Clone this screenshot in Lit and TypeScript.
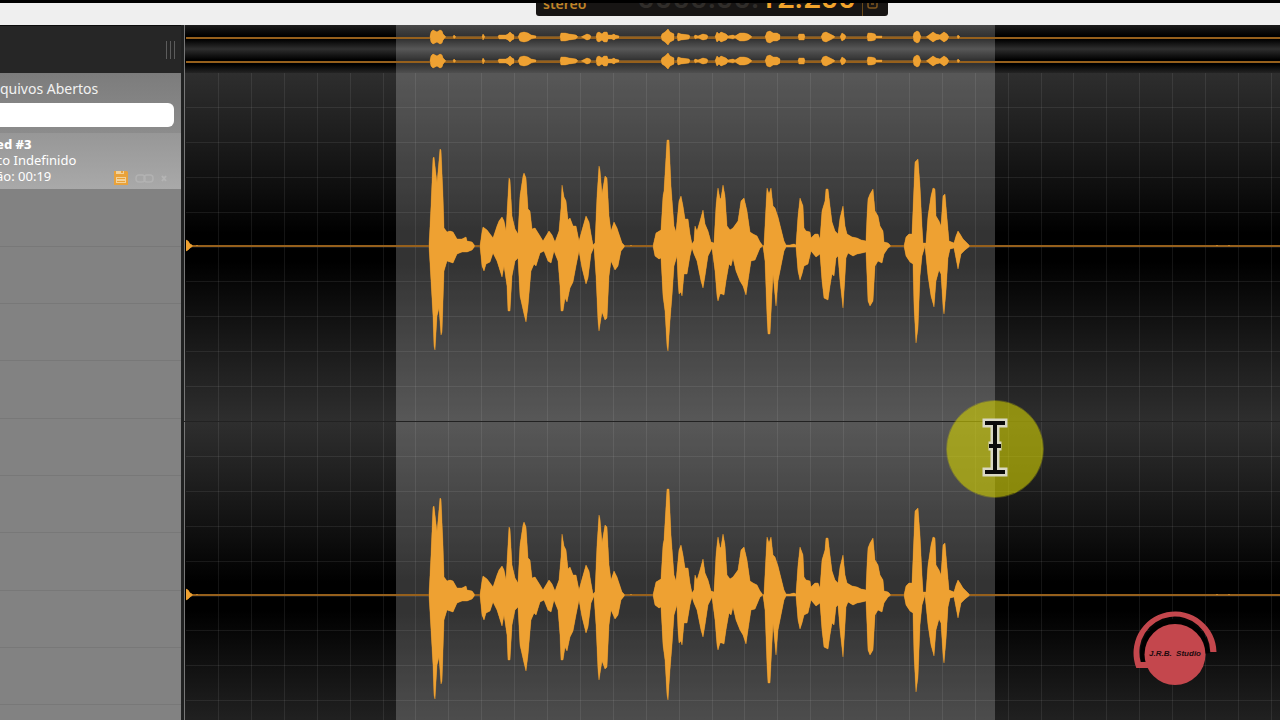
import { LitElement, html, svg, css } from "lit";
import { customElement, property } from "lit/decorators.js";

// Horizontal range of the visible timeline, in timeline units.
const VIEW_START = 186;
const VIEW_WIDTH = 1094;

// Envelopes: "position,amplitude" pairs above and below the zero line.
const UPPER =
  "186,6 188,5 190,2 192,1 193,0 196,0 197,1 198,0 429,0 431,40 433,88 434,89 437,63 440,97 441,96 443,50 444,18 447,14 450,15 453,14 457,7 462,7 466,9 467,5 472,4 475,0 " +
  "480,0 482,14 483,19 487,16 490,12 493,8 497,20 499,25 502,29 504,25 506,15 509,68 510,66 512,30 515,17 518,12 520,50 523,70 524,73 526,68 528,37 530,35 532,17 535,18 540,10 543,5 546,10 549,15 552,11 555,4 " +
  "559,15 561,38 562,61 564,49 566,45 568,26 570,28 573,20 576,20 579,5 582,16 586,30 589,24 591,12 593,1 595,3 597,50 599,80 600,76 602,52 605,70 607,68 609,30 611,15 614,24 617,18 620,9 622,3 625,0 630,0 631,1 632,0 " +
  "653,0 656,13 661,16 663,50 664,55 667,106 669,106 671,60 674,20 676,14 679,45 681,50 683,40 685,27 688,27 690,12 692,2 694,5 695,20 697,15 700,25 703,36 705,22 708,15 711,4 714,3 716,40 717,50 718,58 720,47 721,48 723,61 725,50 727,20 730,16 733,18 738,25 741,45 744,48 747,35 750,14 753,12 757,10 760,4 763,0 " +
  "764,1 766,40 767,58 769,52 771,58 773,40 775,38 778,29 781,17 784,5 786,1 790,1 794,2 796,1 798,30 800,48 803,40 804,18 806,15 810,14 811,8 815,12 818,12 820,7 822,35 825,45 826,57 828,57 830,40 832,24 835,15 838,12 840,28 843,40 845,20 847,12 852,9 857,8 861,6 866,5 867,30 868,47 870,52 873,57 875,35 878,30 880,20 883,15 884,4 888,3 891,0 " +
  "904,0 906,9 909,12 912,12 914,60 915,84 918,87 920,60 922,20 923,3 926,3 928,30 931,50 933,58 935,57 936,30 939,25 941,20 943,50 945,52 947,28 949,5 954,3 956,10 958,15 960,12 963,7 967,3 970,0 1216,0 1217,1 1218,0 1228,0 1229,1 1230,0";
const LOWER =
  "186,5 188,4 190,2 193,0 429,0 431,35 433,70 434,100 435,104 437,70 439,62 441,89 442,86 444,25 447,15 453,17 457,8 462,6 467,6 472,4 475,0 " +
  "480,0 482,20 484,25 486,18 490,16 493,7 497,15 502,31 504,20 507,40 508,65 510,65 512,30 515,15 518,12 520,50 524,68 526,76 528,60 531,25 534,18 536,20 540,7 544,5 548,15 551,17 554,5 558,15 560,40 561,65 563,65 565,52 567,56 570,42 573,36 576,20 579,5 582,22 586,38 588,32 591,8 594,1 596,30 598,75 599,85 602,66 605,74 607,72 609,30 611,15 615,24 618,20 621,5 625,0 " +
  "653,0 655,10 659,13 661,12 663,50 665,65 667,100 668,105 670,75 672,50 674,20 677,10 678,35 679,48 681,46 682,50 684,28 687,28 690,10 692,2 694,8 697,15 701,35 703,42 705,30 708,10 712,2 715,25 717,50 718,55 720,48 722,48 724,49 726,35 729,18 731,20 733,12 736,25 740,35 743,40 746,49 748,35 751,15 755,14 760,2 763,0 " +
  "765,15 767,70 768,88 770,88 773,28 776,60 778,35 781,20 784,5 786,1 796,1 798,25 800,34 802,28 804,20 808,18 811,5 816,11 820,8 822,35 824,52 828,54 830,40 832,28 834,30 836,12 838,10 840,35 843,62 845,30 846,12 848,7 853,10 857,8 862,7 866,6 867,30 868,55 870,60 873,55 875,20 878,15 882,17 884,8 888,2 891,0 " +
  "904,0 906,10 910,16 913,18 914,60 916,97 918,82 920,30 922,10 925,0 928,30 931,50 934,61 936,35 939,24 941,28 943,60 944,68 946,45 948,12 950,3 954,2 958,23 961,8 965,4 970,0";
const OVERVIEW =
  "430,0 431,5 433,7 435,6 437,5 440,7 442,6 443,3 445,1 446,0 453,0 454,2 456,0 482,0 483,3 485,0 498,0 499,2 503,2 506,2 508,3 510,5 512,3 514,2 514,0 518,0 520,4 524,5 528,4 531,2 536,1 536,0 " +
  "560,0 561,4 565,4 569,3 576,2 578,0 581,0 583,1 587,3 590,2 591,0 596,0 597,4 599,5 602,3 604,5 607,5 608,2 612,2 614,3 615,2 619,1 619,0 661,0 662,3 665,5 668,8 670,5 674,3 674,0 677,0 678,4 681,3 689,2 690,0 694,0 695,2 698,1 703,3 707,2 708,0 " +
  "715,0 717,5 719,3 721,5 726,3 728,1 733,2 735,1 740,4 744,4 748,3 751,1 752,0 765,0 767,5 770,6 773,4 777,4 780,2 780,0 798,0 799,3 804,3 805,0 821,0 823,4 826,5 830,3 834,1 835,0 840,0 842,4 845,2 846,0 867,0 868,4 871,4 875,3 876,1 882,1 882,0 " +
  "913,0 914,4 917,6 919,5 921,0 926,0 929,2 933,5 936,3 940,2 944,5 947,3 949,0 957,0 958,2 960,0";

function envelope(upper: string, lower: string, mid: number): string {
  const read = (s: string) => s.split(" ").map((p) => p.split(",").map(Number));
  const top = read(upper).map(([x, a]) => `${x},${mid - a}`);
  const bottom = read(lower)
    .map(([x, a]) => `${x},${mid + a}`)
    .reverse();
  return [...top, ...bottom].join(" ");
}

@customElement("wave-channel")
class WaveChannel extends LitElement {
  @property({ type: Boolean }) overview = false;

  static styles = css`
    :host {
      display: block;
    }
    .wave {
      display: block;
      width: 100%;
      height: 100%;
    }
    .fill {
      fill: #eea132;
      stroke: #c98527;
      stroke-opacity: 0.5;
    }
    .zero {
      fill: #96601c;
    }
    .grid {
      fill: #ffffff;
      fill-opacity: 0.08;
    }
  `;

  render() {
    const h = this.overview ? 24 : 349;
    const mid = this.overview ? 12 : 173;
    const cols = Array.from({ length: 33 }, (_, i) => Math.round(218 + i * 32.9));
    const rows = Array.from({ length: 9 }, (_, i) => Math.round((i + 1) * 34.9) - 1);
    return html`<svg
      class="wave"
      viewBox="${VIEW_START} 0 ${VIEW_WIDTH} ${h}"
      preserveAspectRatio="none"
      aria-hidden="true"
    >
      ${this.overview
        ? null
        : svg`${cols.map((x) => svg`<rect class="grid" x=${x} y="0" width="1" height=${h}></rect>`)}
          ${rows.map((y) => svg`<rect class="grid" x=${VIEW_START} y=${y} width=${VIEW_WIDTH} height="1"></rect>`)}`}
      <polygon
        class="fill"
        points=${envelope(this.overview ? OVERVIEW : UPPER, this.overview ? OVERVIEW : LOWER, mid)}
      ></polygon>
      <rect class="zero" x=${VIEW_START} y=${this.overview ? mid : mid - 1} width=${VIEW_WIDTH} height="2"></rect>
      <polygon
        fill="#eea132"
        points=${envelope(this.overview ? OVERVIEW : UPPER, this.overview ? OVERVIEW : LOWER, mid)}
      ></polygon>
    </svg>`;
  }
}

@customElement("file-panel")
class FilePanel extends LitElement {
  static styles = css`
    :host {
      display: flex;
      flex-direction: column;
      box-sizing: border-box;
      overflow: hidden;
      background: #262626;
      color: #fff;
      font: 13px/16px "Noto Sans", "Open Sans", sans-serif;
    }
    .dock {
      display: flex;
      flex: none;
      justify-content: flex-end;
      align-items: center;
      gap: 3px;
      height: 48px;
      padding: 0 6px;
      border-top: 1px solid #0c0c0c;
      box-sizing: border-box;
    }
    .grip {
      width: 1px;
      height: 18px;
      background: #5c5c5c;
    }
    .panel {
      flex: 1;
      min-height: 0;
      display: flex;
      flex-direction: column;
      background: #828282;
      overflow: hidden;
    }
    .search {
      flex: none;
      display: flex;
      flex-direction: column;
      padding: 6px 7px 6px 0;
      background: linear-gradient(#7c7c7c, #8c8c8c);
    }
    .title {
      font-size: 14px;
      line-height: 20px;
      height: 24px;
      color: #f2f2f2;
      white-space: nowrap;
    }
    .box {
      box-sizing: border-box;
      width: 100%;
      height: 24px;
      border: 0;
      border-radius: 0 6px 6px 0;
      background: #fff;
      outline: 0;
    }
    .file {
      flex: none;
      display: flex;
      justify-content: space-between;
      align-items: flex-end;
      height: 56px;
      padding: 0 13px 4px 0;
      box-sizing: border-box;
      background: linear-gradient(#979797, #a9a9a9);
      white-space: nowrap;
    }
    .meta {
      display: flex;
      flex-direction: column;
      margin-left: -4px;
      padding-bottom: 1px;
    }
    .name {
      font-weight: 800;
    }
    .badges {
      display: block;
      width: 56px;
      height: 16px;
    }
    .row {
      flex: none;
      box-sizing: border-box;
      height: 57px;
      border-bottom: 1px solid #787878;
    }
    .row:nth-child(3n) {
      height: 58px;
    }
  `;

  render() {
    return html`
      <div class="dock"><i class="grip"></i><i class="grip"></i><i class="grip"></i></div>
      <div class="panel">
        <div class="search">
          <label class="title" for="filter">quivos Abertos</label>
          <input class="box" id="filter" type="text" />
        </div>
        <div class="file">
          <div class="meta">
            <span class="name">ed #3</span>
            <span>co Indefinido</span>
            <span>ão: 00:19</span>
          </div>
          <svg class="badges" viewBox="0 0 56 16" aria-hidden="true">
            <path fill="#e9a23b" d="M2 2h13l1 1v13H2z" />
            <path fill="#f3d29a" d="M4 2h8v3H4zM4 8h10v6H4z" />
            <path fill="#e9a23b" d="M9 2h2v2h-2zM5 9h8v1H5zM5 12h8v1H5z" />
            <g fill="none" stroke="#b2b2b2" stroke-width="1.5">
              <rect x="24" y="6" width="9" height="7" rx="3" />
              <rect x="32" y="6" width="9" height="7" rx="3" />
            </g>
            <path stroke="#b4b4b4" stroke-width="2" d="M50 7l4 5M54 7l-4 5" />
          </svg>
        </div>
        ${Array.from({ length: 9 }, () => html`<div class="row"></div>`)}
      </div>
    `;
  }
}

@customElement("app-root")
class AppRoot extends LitElement {
  static styles = css`
    :host {
      display: flex;
      flex-direction: column;
      position: relative;
      height: 100vh;
      overflow: hidden;
      background: #000;
      font-family: "Noto Sans", "Open Sans", sans-serif;
    }
    .toolbar {
      flex: none;
      display: flex;
      justify-content: center;
      align-items: flex-start;
      height: 25px;
      box-sizing: border-box;
      padding-left: 144px;
      border-top: 3px solid #000;
      background: #efefef;
    }
    .display {
      display: flex;
      align-items: flex-end;
      box-sizing: border-box;
      width: 352px;
      height: 13px;
      padding: 0 6px 0 7px;
      overflow: hidden;
      border-radius: 0 0 3px 3px;
      background: #171514;
      color: #f2a42c;
    }
    .mode {
      flex: 1;
      font-size: 14px;
      line-height: 24px;
      font-weight: 600;
      color: #c08427;
    }
    .clock {
      font: 500 31px/37px "Roboto", sans-serif;
      white-space: nowrap;
    }
    .idle {
      color: #302d2a;
    }
    .lock {
      display: flex;
      justify-content: center;
      align-items: flex-start;
      width: 19px;
      height: 13px;
      margin-left: 6px;
      border-left: 1px solid #6b4a1a;
    }
    .lock-icon {
      width: 11px;
      height: 6px;
    }
    .work {
      flex: 1;
      min-height: 0;
      display: grid;
      grid-template-columns: 181px 1fr;
    }
    .editor {
      position: relative;
      min-width: 0;
      overflow: hidden;
      border-left: 3px solid #202121;
      padding-left: 2px;
      background:
        linear-gradient(#777, #777) 0 0 / 1px 100% no-repeat,
        linear-gradient(#1c1c1c, #000 45%, #000 60%, #2e2e2e) 0 0 / 100% 24px no-repeat,
        linear-gradient(#2e2e2e, #000 45%, #000 65%, #242424) 0 24px / 100% 24px no-repeat,
        linear-gradient(#2e2e2e, #202020 15%, #0e0e0e 33%, #000 46%, #000 54%, #0e0e0e 67%, #202020 85%, #2e2e2e) 0 48px /
          100% 349px repeat-y;
    }
    .small {
      height: 24px;
    }
    .track {
      height: 349px;
    }
    .selection {
      position: absolute;
      top: 0;
      bottom: 0;
      left: 19.3%;
      width: 54.7%;
      background: rgba(255, 255, 255, 0.2);
    }
    .waves {
      position: relative;
    }
    .divider {
      position: absolute;
      top: 396px;
      left: 0;
      right: 0;
      height: 1px;
      background: #222;
    }
    .pointer {
      position: absolute;
      left: 945px;
      top: 399px;
      width: 100px;
      height: 100px;
    }
    .brand {
      position: absolute;
      right: 62px;
      bottom: 33px;
      width: 86px;
      height: 76px;
    }
    .brand-text {
      font: italic 700 8px "Liberation Sans", Arial, sans-serif;
      fill: #220a0d;
      white-space: pre;
    }
  `;

  render() {
    return html`
      <header class="toolbar">
        <div class="display">
          <span class="mode">stereo</span>
          <span class="clock"><span class="idle">0000:00:</span>12.200</span>
          <span class="lock">
            <svg class="lock-icon" viewBox="0 0 11 6" aria-hidden="true">
              <path fill="none" stroke="#80561d" stroke-width="1.5" d="M1 0v3q0 2 2 2h5q2 0 2-2V0M4 1h3" />
            </svg>
          </span>
        </div>
      </header>
      <main class="work">
        <file-panel></file-panel>
        <section class="editor">
          <div class="selection"></div>
          <div class="waves">
            <wave-channel class="small" overview></wave-channel>
            <wave-channel class="small" overview></wave-channel>
            <wave-channel class="track"></wave-channel>
            <wave-channel class="track"></wave-channel>
          </div>
          <div class="divider"></div>
        </section>
      </main>
      <svg class="pointer" viewBox="0 0 100 100" aria-hidden="true">
        <circle cx="50" cy="50" r="48" fill="#d4d200" fill-opacity="0.6" />
        <circle cx="50" cy="50" r="48.500" fill="none" stroke="#d4d200" stroke-opacity="0.3" />
        <path fill="none" stroke="#d9d8c4" stroke-width="9" stroke-linecap="square" d="M42 24h16M50 24v49M42 73h16M48 47h4" />
        <path fill="none" stroke="#0b0b0b" stroke-width="4" d="M40 24h20M50 24v49M40 73h20M44 47h12" />
      </svg>
      <svg class="brand" viewBox="0 0 86 76" role="img" aria-label="J.R.B. Studio">
        <path d="M9 51A35.500 35.500 0 0 1 43 8A35.500 35.500 0 0 1 78 42z" />
        <path fill="#c4474d" d="M4.300 57A41.500 41.500 0 1 1 84.500 41H78.300A35.500 35.500 0 1 0 8.700 51H22V57z" />
        <circle cx="43" cy="43.500" r="30.500" fill="#c4474d" />
        <text class="brand-text" x="17" y="45">J.R.B.  Studio</text>
      </svg>
    `;
  }
}
